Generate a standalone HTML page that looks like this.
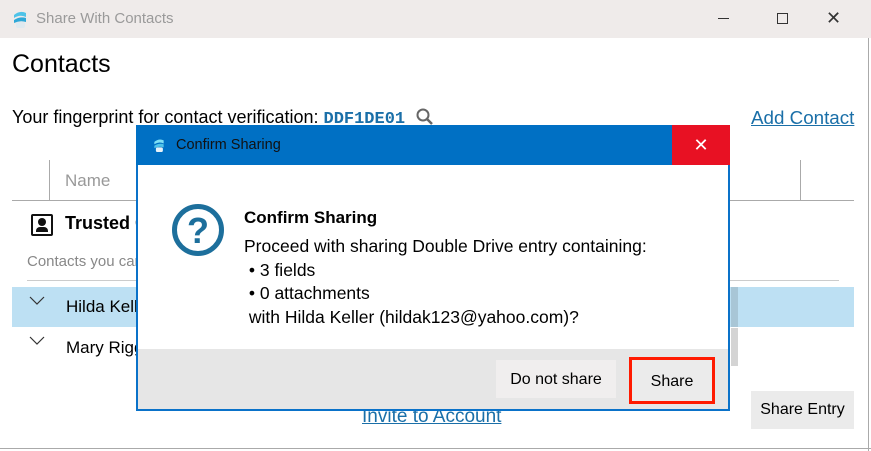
<!DOCTYPE html>
<html><head><meta charset="utf-8"><style>
*{margin:0;padding:0;box-sizing:border-box}
body{width:871px;height:451px;overflow:hidden;background:#fff;font-family:"Liberation Sans",sans-serif;position:relative;color:#000}
.a{position:absolute;white-space:nowrap}
</style></head><body>
<div class="a" style="left:0;top:0;width:871px;height:38px;background:#efebea"></div>
<svg class="a" style="left:11px;top:9px" width="18" height="20" viewBox="0 0 18 20"><path d="M3 6 Q9 1 15 4 L15 8 Q9 5 3 9Z" fill="#4fc3e8"/><path d="M3 11 Q9 7 15 9 L15 13 Q9 11 3 14Z" fill="#2ea8d8"/><rect x="5" y="13" width="9" height="6" rx="2" fill="#dfe9ef"/></svg>
<div class="a" style="left:36px;top:10px;font-size:15px;color:#9a9a9a">Share With Contacts</div>
<div class="a" style="left:718px;top:18px;width:11px;height:1px;background:#333"></div>
<div class="a" style="left:777px;top:13px;width:11px;height:11px;border:1px solid #333"></div>
<div class="a" style="left:826px;top:8px;font-size:18px;color:#333">✕</div>
<div class="a" style="left:868px;top:38px;width:1px;height:413px;background:#aaa"></div>
<div class="a" style="left:0;top:448px;width:871px;height:1px;background:#aaa"></div>
<div class="a" style="left:12px;top:50px;font-size:25px">Contacts</div>
<div class="a" style="left:12px;top:107px;font-size:18px">Your fingerprint for contact verification: <span style="font-family:'Liberation Mono',monospace;color:#1a6fa8;font-size:17px;font-weight:bold">DDF1DE01</span></div>
<svg class="a" style="left:416px;top:108px" width="18" height="18"><circle cx="7" cy="7" r="5.5" fill="none" stroke="#666" stroke-width="2"/><line x1="11" y1="11" x2="16" y2="16" stroke="#666" stroke-width="2.5"/></svg>
<div class="a" style="left:751px;top:107px;font-size:18.8px;color:#1a6fa8;text-decoration:underline">Add Contact</div>
<div class="a" style="left:49px;top:160px;width:1px;height:40px;background:#aaa"></div>
<div class="a" style="left:800px;top:160px;width:1px;height:40px;background:#aaa"></div>
<div class="a" style="left:12px;top:200px;width:842px;height:1px;background:#aaa"></div>
<div class="a" style="left:65px;top:171px;font-size:17px;color:#999">Name</div>
<div class="a" style="left:31px;top:214px;width:22px;height:22px;border:2px solid #111;border-radius:2px"></div>
<div class="a" style="left:38px;top:218px;width:8px;height:8px;border-radius:50%;background:#111"></div>
<div class="a" style="left:36px;top:227px;width:12px;height:5px;background:#111;border-radius:4px 4px 0 0"></div>
<div class="a" style="left:65px;top:213px;font-size:18px;font-weight:bold">Trusted Contacts</div>
<div class="a" style="left:27px;top:253px;font-size:15px;color:#888">Contacts you can share with</div>
<div class="a" style="left:27px;top:280px;width:812px;height:1px;background:#ccc"></div>
<div class="a" style="left:12px;top:287px;width:842px;height:40px;background:#bde0f3"></div>
<div class="a" style="left:731px;top:287px;width:7px;height:40px;background:#a8c6d6"></div>
<div class="a" style="left:731px;top:328px;width:7px;height:38px;background:#d4d4d4"></div>
<svg class="a" style="left:29px;top:296px" width="16" height="10"><path d="M1 1 L8 8 L15 1" fill="none" stroke="#333" stroke-width="1.2"/></svg>
<div class="a" style="left:66px;top:297px;font-size:17px">Hilda Keller</div>
<svg class="a" style="left:29px;top:336px" width="16" height="10"><path d="M1 1 L8 8 L15 1" fill="none" stroke="#333" stroke-width="1.2"/></svg>
<div class="a" style="left:66px;top:338px;font-size:17px">Mary Riggs</div>
<div class="a" style="left:362px;top:406px;font-size:19px;color:#1a6fa8;text-decoration:underline">Invite to Account</div>
<div class="a" style="left:751px;top:391px;width:103px;height:38px;background:#ebebeb;font-size:16px;text-align:center;line-height:38px">Share Entry</div>

<div class="a" style="left:136px;top:125px;width:594px;height:286px;border:2px solid #0a72c9;border-top:0;background:#fff"></div>
<div class="a" style="left:136px;top:125px;width:594px;height:40px;background:#0070c4"></div>
<div class="a" style="left:672px;top:125px;width:58px;height:40px;background:#e81123;color:#fff;font-size:18px;text-align:center;line-height:40px">✕</div>
<svg class="a" style="left:152px;top:136px" width="14" height="18" viewBox="0 0 18 20"><path d="M3 6 Q9 1 15 4 L15 8 Q9 5 3 9Z" fill="#7fe0f5"/><path d="M3 11 Q9 7 15 9 L15 13 Q9 11 3 14Z" fill="#4fc3e8"/><rect x="5" y="13" width="9" height="6" rx="2" fill="#e8f2f8"/></svg>
<div class="a" style="left:176px;top:137px;font-size:14.5px;color:#111">Confirm Sharing</div>
<div class="a" style="left:172px;top:204px;width:52px;height:52px;border:5px solid #1d6f9c;border-radius:50%;color:#1d6f9c;font-size:36px;font-weight:bold;text-align:center;line-height:43px">?</div>
<div class="a" style="left:244px;top:208px;font-size:17px;font-weight:bold">Confirm Sharing</div>
<div class="a" style="left:244px;top:235px;font-size:17.5px;line-height:23.5px">Proceed with sharing Double Drive entry containing:<br>&nbsp;• 3 fields<br>&nbsp;• 0 attachments<br>&nbsp;with Hilda Keller (hildak123@yahoo.com)?</div>
<div class="a" style="left:138px;top:349px;width:590px;height:60px;background:#e6e6e6"></div>
<div class="a" style="left:496px;top:360px;width:120px;height:38px;background:#f0eeee;font-size:16px;text-align:center;line-height:40px">Do not share</div>
<div class="a" style="left:629px;top:357px;width:86px;height:47px;border:3px solid #ff1a00;background:#ebebeb;font-size:16px;text-align:center;line-height:43px">Share</div>
</body></html>
